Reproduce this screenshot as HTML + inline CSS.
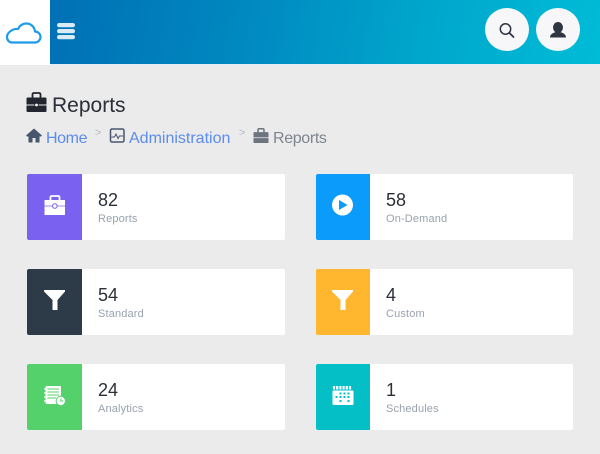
<!DOCTYPE html>
<html lang="en">
<head>
<meta charset="utf-8">
<title>Reports</title>
<style>
html,body{margin:0;padding:0}
body{width:600px;height:454px;overflow:hidden;background:#ebebeb;font-family:"Liberation Sans",sans-serif;position:relative}
.abs{position:absolute}
.hdr{left:0;top:0;width:600px;height:64px;background:linear-gradient(100deg,#0070b4 8%,#0088c0 40%,#00a6cc 70%,#00bcd6 100%);border-bottom:1px solid #dfeef2}
.logo{left:0;top:0;width:50px;height:65px;background:#fff}
.circ{top:8px;width:44px;height:43px;border-radius:50%;background:#f7f7f9}
.t{position:absolute;white-space:nowrap}
.card{position:absolute;width:258px;height:66px;background:#fff;border-radius:2px;overflow:hidden}
.ic{position:absolute;left:0;top:0;width:55px;height:66px}
.ic svg{position:absolute;left:0;top:0}
.n{position:absolute;left:71px;top:16px;font-size:18px;line-height:20px;color:#2b2f38}
.l{position:absolute;left:71px;top:38px;font-size:11px;line-height:14px;color:#98a2ae;letter-spacing:.15px}
.a{color:#5c8cec;font-size:16px;line-height:18px}
</style>
</head>
<body>
<div class="abs hdr"></div>
<div class="abs logo"></div>
<svg class="abs" style="left:0;top:0" width="50" height="64" viewBox="0 0 50 64"><path d="M12 42.500H35C38 42.500 40.500 40 40.500 37C40.500 34 38 31.500 35 31.500C34.500 26.500 30.500 23.500 26.500 23.500C22.500 23.500 19.500 26 18 29C12 28.500 7 33 7 37C7 40 9 42.500 12 42.500Z" fill="none" stroke="#1e9bea" stroke-width="2.200" stroke-linejoin="round"/></svg>
<svg class="abs" style="left:57px;top:23px" width="19" height="17"><rect x="0" y="0" width="18" height="4.200" rx="2.100" fill="#d9ebf5"/><rect x="0" y="6" width="18" height="4.200" rx="2.100" fill="#d9ebf5"/><rect x="0" y="12" width="18" height="4.200" rx="2.100" fill="#d9ebf5"/></svg>
<div class="abs circ" style="left:485px"></div>
<div class="abs circ" style="left:536px"></div>
<svg class="abs" style="left:498px;top:21px" width="18" height="18" viewBox="0 0 18 18"><circle cx="7.500" cy="8" r="5.200" fill="none" stroke="#2f3540" stroke-width="1.500"/><path d="M11.500 12L15.500 16" stroke="#2f3540" stroke-width="1.800" stroke-linecap="round"/></svg>
<svg class="abs" style="left:549px;top:21px" width="18" height="17" viewBox="0 0 18 17"><ellipse cx="9" cy="6.500" rx="5" ry="5.500" fill="#2f3540"/><path d="M1 16.500C1 13.500 3.500 12 7 11H11C14.500 12 17 13.500 17 16.500Z" fill="#2f3540"/></svg>

<svg class="abs" style="left:26px;top:92px" width="21" height="20" viewBox="0 0 21 20"><path d="M6.500 6V2.500C6.500 1.500 7 1 8 1H13C14 1 14.500 1.500 14.500 2.500V6" fill="none" stroke="#23262e" stroke-width="1.800"/><path d="M1.500 5.500H19.500C20.200 5.500 20.500 6 20.500 6.500V12.500H0.500V6.500C0.500 6 .8 5.500 1.500 5.500Z" fill="#23262e"/><path d="M0.500 13.500H20.500V19C20.500 19.600 20 20 19.500 20H1.500C1 20 .5 19.600 .5 19Z" fill="#23262e"/><circle cx="10.500" cy="13" r="1.800" fill="#fff" stroke="#23262e" stroke-width=".8"/></svg>
<div class="t" style="left:52px;top:94px;font-size:21px;line-height:24px;color:#2b2e36">Reports</div>

<svg class="abs" style="left:26px;top:128px" width="16" height="15" viewBox="0 0 16 15"><path d="M8 0.500L0 7.500L1 8.500H2.500V14.500H6.500V10H9.500V14.500H13.500V8.500H15L16 7.500Z" fill="#47566e"/></svg>
<div class="t a" style="left:46px;top:130px;letter-spacing:-.4px">Home</div>
<div class="t" style="left:95px;top:127px;font-size:11px;line-height:13px;color:#b5b9bf">&gt;</div>
<svg class="abs" style="left:109px;top:128px" width="16" height="15" viewBox="0 0 16 15"><rect x="1.500" y="1" width="13.500" height="13" rx="1.500" fill="none" stroke="#47566e" stroke-width="1.500"/><path d="M2.500 9H5.500L7 6L9 10.500L10.500 8H14" fill="none" stroke="#47566e" stroke-width="1"/></svg>
<div class="t a" style="left:129px;top:130px">Administration</div>
<div class="t" style="left:239px;top:127px;font-size:11px;line-height:13px;color:#b5b9bf">&gt;</div>
<svg class="abs" style="left:253px;top:128px" width="16" height="15" viewBox="0 0 21 20"><path d="M6.500 6V2.500C6.500 1.500 7 1 8 1H13C14 1 14.500 1.500 14.500 2.500V6" fill="none" stroke="#6c7480" stroke-width="2"/><path d="M1.500 5.500H19.500C20.200 5.500 20.500 6 20.500 6.500V12.500H0.500V6.500C0.500 6 .8 5.500 1.500 5.500Z" fill="#6c7480"/><path d="M0.500 13.500H20.500V19C20.500 19.600 20 20 19.500 20H1.500C1 20 .5 19.600 .5 19Z" fill="#6c7480"/></svg>
<div class="t" style="left:273px;top:130px;font-size:16px;line-height:18px;color:#7f858e;letter-spacing:-.35px">Reports</div>

<!-- Reports -->
<div class="card" style="left:27px;top:174px">
<div class="ic" style="background:#7b61f0"><svg width="55" height="66"><path d="M23.500 27V23.500C23.500 22.500 24 22 25 22H31C32 22 32.500 22.500 32.500 23.500V27" fill="none" stroke="#fff" stroke-width="1.800"/><path d="M17.500 26H38V41H17.500Z" fill="#fff"/><path d="M17.500 32H38" stroke="#7b61f0" stroke-width=".8"/><circle cx="27.800" cy="32" r="2.300" fill="#fff" stroke="#7b61f0" stroke-width="1"/></svg></div>
<div class="n">82</div><div class="l">Reports</div>
</div>
<!-- On-Demand -->
<div class="card" style="left:316px;top:174px;width:257px">
<div class="ic" style="background:#0b9bfb;width:54px"><svg width="54" height="66"><circle cx="26.500" cy="31" r="10.500" fill="#fff"/><path d="M23 26L31.500 31L23 36Z" fill="#0b9bfb"/></svg></div>
<div class="n" style="left:70px">58</div><div class="l" style="left:70px">On-Demand</div>
</div>
<!-- Standard -->
<div class="card" style="left:27px;top:269px">
<div class="ic" style="background:#2d3a48"><svg width="55" height="66"><path d="M17 21H38V22.500L30.500 31V41H25.500V31L17 22.500Z" fill="#fff"/></svg></div>
<div class="n">54</div><div class="l">Standard</div>
</div>
<!-- Custom -->
<div class="card" style="left:316px;top:269px;width:257px">
<div class="ic" style="background:#feb72f;width:54px"><svg width="54" height="66"><path d="M16 21H37V22.500L29.500 31V41H24.500V31L16 22.500Z" fill="#fff"/></svg></div>
<div class="n" style="left:70px">4</div><div class="l" style="left:70px">Custom</div>
</div>
<!-- Analytics -->
<div class="card" style="left:27px;top:364px">
<div class="ic" style="background:#54d16a"><svg width="55" height="66"><rect x="18.500" y="22" width="15.500" height="18" rx="1" fill="#fff"/><path d="M20.500 25H32M20.500 28H32M20.500 31H32M20.500 34H29" stroke="#54d16a" stroke-width="1"/><path d="M17 25H20M17 29H20M17 33H20M17 37H20" stroke="#fff" stroke-width="1.200"/><circle cx="33.800" cy="37" r="4.700" fill="#fff" stroke="#54d16a"/><path d="M33.800 34.500V37H36" stroke="#54d16a" stroke-width="1" fill="none"/></svg></div>
<div class="n">24</div><div class="l">Analytics</div>
</div>
<!-- Schedules -->
<div class="card" style="left:316px;top:364px;width:257px">
<div class="ic" style="background:#05bfc7;width:54px"><svg width="54" height="66"><path d="M18 22V25.500M21.200 22V25.500M24.400 22V25.500M27.600 22V25.500M30.800 22V25.500M34 22V25.500" stroke="#fff" stroke-width="2.200"/><rect x="16.500" y="26.500" width="21" height="14.500" rx="1" fill="#fff"/><g fill="#05bfc7"><rect x="23.500" y="28.500" width="2" height="2"/><rect x="27.500" y="28.500" width="2" height="2"/><rect x="31.500" y="28.500" width="2" height="2"/><rect x="19.500" y="32" width="2" height="2"/><rect x="23.500" y="32" width="2" height="2"/><rect x="27.500" y="32" width="2" height="2"/><rect x="31.500" y="32" width="2" height="2"/><rect x="23.500" y="36" width="2" height="2"/><rect x="31.500" y="36" width="2" height="2"/></g></svg></div>
<div class="n" style="left:70px">1</div><div class="l" style="left:70px">Schedules</div>
</div>
</body>
</html>
